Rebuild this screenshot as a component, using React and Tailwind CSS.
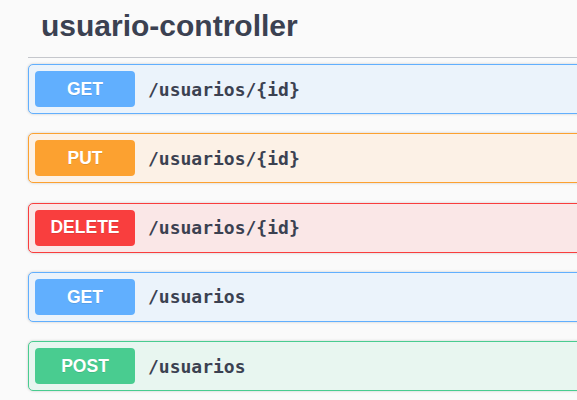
import React from "react";

const ops = [
  { m: "GET", p: "/usuarios/{id}", badge: "bg-[#61affe]", box: "bg-[#ebf3fb] border-[#61affe]" },
  { m: "PUT", p: "/usuarios/{id}", badge: "bg-[#fca130]", box: "bg-[#fcf1e6] border-[#fca130]" },
  { m: "DELETE", p: "/usuarios/{id}", badge: "bg-[#f93e3e]", box: "bg-[#fae7e7] border-[#f93e3e]" },
  { m: "GET", p: "/usuarios", badge: "bg-[#61affe]", box: "bg-[#ebf3fb] border-[#61affe]" },
  { m: "POST", p: "/usuarios", badge: "bg-[#49cc90]", box: "bg-[#e8f6f0] border-[#49cc90]" },
];

export default function App() {
  return (
    <div className="w-[577px] h-[400px] overflow-hidden bg-[#fafafa] pl-[28px]">
      <div className="w-[640px]">
        <div
          className="h-[58px] border-b border-[#c5c7cc] pl-[13px] pt-[8px] text-[30px] leading-[36px] font-bold text-[#3b4151]"
          style={{ fontFamily: '"Liberation Sans", Arial, sans-serif' }}
        >
          usuario-controller
        </div>
        <div className="mt-[6px] flex flex-col gap-[19.25px]">
          {ops.map((o, i) => (
            <div
              key={i}
              className={`h-[50px] flex items-center border rounded-[5px] px-[6px] shadow-[0_0_3px_rgba(0,0,0,0.19)] ${o.box}`}
            >
              <div
                className={`w-[100px] h-[36px] flex items-center justify-center rounded-[4px] text-white font-bold text-[17.5px] [text-shadow:0_1px_0_rgba(0,0,0,0.1)] ${o.badge}`}
                style={{ fontFamily: '"Liberation Sans", Arial, sans-serif' }}
              >
                {o.m}
              </div>
              <div
                className="ml-[13px] text-[18px] font-bold text-[#3b4151]"
                style={{ fontFamily: '"DejaVu Sans Mono", monospace' }}
              >
                {o.p}
              </div>
            </div>
          ))}
        </div>
      </div>
    </div>
  );
}
